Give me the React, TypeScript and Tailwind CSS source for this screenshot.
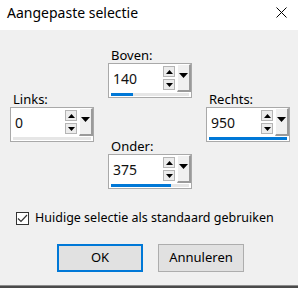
import React from 'react';

interface SpinFieldProps {
  label: string;
  value: string;
  fill: number; // blue bar width in px
}

const Arrow: React.FC<{ up?: boolean; big?: boolean }> = ({ up, big }) => {
  const w = big ? 9 : 7;
  const h = big ? 5 : 4;
  return (
    <svg width={w} height={h} viewBox={`0 0 ${w} ${h}`} className="block">
      {up ? (
        <path d={`M0 ${h} L${w / 2} 0 L${w} ${h} Z`} fill="#000" />
      ) : (
        <path d={`M0 0 L${w} 0 L${w / 2} ${h} Z`} fill="#000" />
      )}
    </svg>
  );
};

const SpinField: React.FC<SpinFieldProps> = ({ label, value, fill }) => (
  <div className="flex flex-col">
    <div className="pl-[3px] text-[13px] leading-[15px] h-[15px] text-black">{label}</div>
    <div className="w-[84px] h-[35px] border border-[#a9a9a9] bg-white flex flex-col">
      <div className="h-[28px] flex items-center">
        <span className="flex-1 pl-[4px] text-[14px] text-[#111]">{value}</span>
        {/* spin buttons */}
        <div className="flex flex-col gap-[2px] mr-[2px]">
          <div className="w-[12px] h-[11px] border border-[#b5b5b5] bg-[#ececec] flex items-center justify-center">
            <Arrow up />
          </div>
          <div className="w-[12px] h-[11px] border border-[#b5b5b5] bg-[#ececec] flex items-center justify-center">
            <Arrow />
          </div>
        </div>
        {/* dropdown button */}
        <div className="w-[14px] h-full bg-[#f0f0f0] border-l border-t border-l-white border-t-white border-r-2 border-b-2 border-r-[#9a9a9a] border-b-[#9a9a9a] flex items-center justify-center pb-[4px]">
          <Arrow big />
        </div>
      </div>
      <div className="mt-[1px] mx-[2px] h-[3px] bg-[#e6e6e6]">
        <div className="h-full bg-[#0078d7]" style={{ width: fill }} />
      </div>
    </div>
  </div>
);

export default function App() {
  return (
    <div
      className="w-[298px] h-[288px] flex flex-col bg-[#f0f0f0] text-black"
      style={{ fontFamily: '"Noto Sans", "Segoe UI", sans-serif' }}
    >
      {/* Title bar */}
      <div className="h-[30px] bg-white flex items-start justify-between shrink-0">
        <span className="pl-[7px] pt-[3px] text-[14px] leading-[20px]">Aangepaste selectie</span>
        <svg width="11" height="11" viewBox="0 0 11 11" className="mt-[7px] mr-[11px]">
          <path d="M0.5 0.5 L10.5 10.5 M10.5 0.5 L0.5 10.5" stroke="#000" strokeWidth="1" />
        </svg>
      </div>

      {/* Body */}
      <div className="flex-1 flex flex-col">
        <div className="flex pl-[10px] gap-[14px]">
          <div className="pt-[62px]">
            <SpinField label="Links:" value="0" fill={0} />
          </div>
          <div className="pt-[18px] flex flex-col gap-[41px]">
            <SpinField label="Boven:" value="140" fill={22} />
            <SpinField label="Onder:" value="375" fill={60} />
          </div>
          <div className="pt-[62px]">
            <SpinField label="Rechts:" value="950" fill={78} />
          </div>
        </div>

        {/* Checkbox */}
        <div className="flex items-center mt-[21px] pl-[16px]">
          <div className="w-[13px] h-[13px] border border-[#333] bg-white flex items-center justify-center">
            <svg width="11" height="9" viewBox="0 0 11 9">
              <path d="M1 4.5 L4 7.5 L10 1" stroke="#333" strokeWidth="1.2" fill="none" />
            </svg>
          </div>
          <span className="ml-[6px] text-[12.5px] leading-[16px]">Huidige selectie als standaard gebruiken</span>
        </div>

        {/* Buttons */}
        <div className="flex gap-[15px] pl-[57px] mt-[18px]">
          <button className="w-[86px] h-[28px] border-2 border-[#0078d7] bg-[#e1e1e1] text-[13px]">OK</button>
          <button className="w-[86px] h-[28px] border border-[#adadad] bg-[#e1e1e1] text-[13px]">Annuleren</button>
        </div>
      </div>

      <div className="h-[3px] shrink-0 bg-[#4a4a4a] border-t border-[#8c8c8c]" />
    </div>
  );
}
